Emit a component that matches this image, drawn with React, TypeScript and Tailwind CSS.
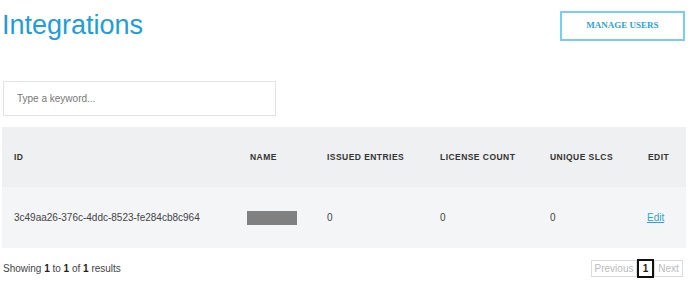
import React from 'react';

const columns = [
  { key: 'id', label: 'ID', width: 'w-[236px]' },
  { key: 'name', label: 'Name', width: 'w-[77px]' },
  { key: 'issued', label: 'Issued Entries', width: 'w-[113px]' },
  { key: 'license', label: 'License Count', width: 'w-[110px]' },
  { key: 'unique', label: 'Unique SLCs', width: 'w-[98px]' },
  { key: 'edit', label: 'Edit', width: 'w-[50px]' },
];

const rows = [
  {
    id: '3c49aa26-376c-4ddc-8523-fe284cb8c964',
    issued: 0,
    license: 0,
    unique: 0,
  },
];

export default function App() {
  return (
    <div className="min-h-screen bg-white font-['Liberation_Sans',Arial,sans-serif] text-[#444]">
      <div className="ml-[2px] w-[684px]">
        <header className="flex items-start justify-between">
          <h1 className="pt-[10px] text-[27px] leading-[31px] font-normal text-[#1e9ddb]">
            Integrations
          </h1>
          <button
            type="button"
            className="mt-[11px] mr-[1px] h-[30px] w-[125px] border-2 border-[#7ccbf1] bg-white font-['Liberation_Serif','Times_New_Roman',serif] text-[9px] font-bold uppercase text-[#2ba3e0]"
          >
            Manage Users
          </button>
        </header>

        <input
          type="text"
          placeholder="Type a keyword..."
          className="mt-[40px] ml-[1px] block h-[35px] w-[273px] border border-[#e3e3e3] px-[13px] text-[10px] text-[#444] placeholder:text-[#777] outline-none"
        />

        <table className="mt-[11px] w-[684px] table-fixed border-collapse">
          <thead>
            <tr className="h-[60px] bg-[#eef0f2]">
              {columns.map((col) => (
                <th
                  key={col.key}
                  className={`${col.width} px-[12px] text-left text-[8.5px] font-bold uppercase tracking-[0.45px] text-[#333]`}
                >
                  {col.label}
                </th>
              ))}
            </tr>
          </thead>
          <tbody>
            {rows.map((row) => (
              <tr key={row.id} className="h-[61px] bg-[#f4f5f6] text-[10px] text-[#444]">
                <td className="px-[12px]">{row.id}</td>
                <td className="pl-[9px]">
                  <div className="h-[14px] w-[50px] bg-[#808080]" />
                </td>
                <td className="px-[12px]">{row.issued}</td>
                <td className="px-[12px]">{row.license}</td>
                <td className="px-[12px]">{row.unique}</td>
                <td className="px-[11px]">
                  <a href="#" className="text-[#2ba3e0] underline">
                    Edit
                  </a>
                </td>
              </tr>
            ))}
          </tbody>
        </table>

        <div className="mt-[11px] flex items-center justify-between">
          <p className="ml-[1px] text-[10px] text-[#444]">
            Showing <b className="text-[#222]">1</b> to <b className="text-[#222]">1</b> of{' '}
            <b className="text-[#222]">1</b> results
          </p>
          <div className="mr-[3px] flex items-center text-[10px]">
            <span className="flex h-[17px] w-[46px] items-center justify-center border border-[#dcdcdc] text-[#bbb]">
              Previous
            </span>
            <span className="flex h-[19px] w-[17px] items-center justify-center border-2 border-[#111] font-bold text-[#222]">
              1
            </span>
            <span className="flex h-[17px] w-[29px] items-center justify-center border border-[#dcdcdc] text-[#bbb]">
              Next
            </span>
          </div>
        </div>
      </div>
    </div>
  );
}
